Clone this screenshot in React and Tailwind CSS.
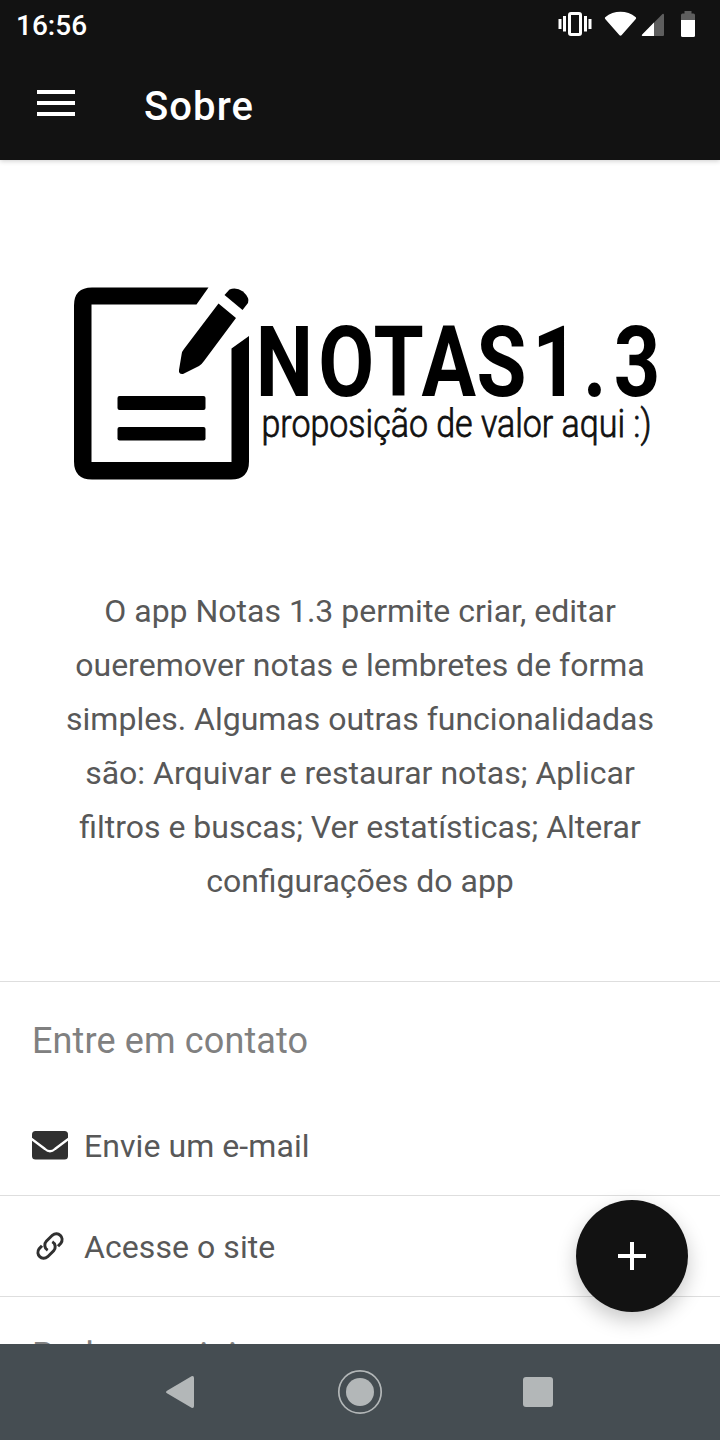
function StatusBar() {
  return (
    <div className="flex h-[50px] items-center justify-between pl-4 pr-6">
      <span className="pt-[2px] text-[28px] font-medium leading-[50px]">16:56</span>
      <svg className="h-[50px] w-[140px]" viewBox="556 0 140 50" fill="#fff">
        <rect x="569.5" y="13.5" width="11" height="21" rx="1.5" fill="none" stroke="#fff" strokeWidth="3" />
        <path d="M558.5 19h3v10h-3zM563 16h3v15.500h-3zM584 16h3v15.500h-3zM588.500 19h3v10h-3z" />
        <path d="M605.200 17.300C614 10 627 10 635.800 17.300q.8.800 0 1.700L621.500 35.200q-1 .9-2 0L605.200 19q-.8-.9 0-1.700z" />
        <path d="M664 14.500v20.500q0 1-1 1h-20.500q-1.200-.4-.5-1.200L662.500 14q1.200-.7 1.500.5z" fill="#5e5e5e" />
        <path d="M654 22.500V36h-11.500q-1.200-.4-.5-1.200z" />
        <path d="M681 20v-5q0-1.500 1.500-1.500h2V11h7v2.500h2q1.500 0 1.500 1.500v5z" fill="#5e5e5e" />
        <path d="M681 20h14v15.500q0 1.500-1.500 1.500h-11q-1.500 0-1.500-1.500z" />
      </svg>
    </div>
  );
}

function Header() {
  return (
    <header className="relative z-10 h-40 shrink-0 bg-[#121212] text-white shadow-[0_1px_5px_rgba(0,0,0,0.2)]">
      <StatusBar />
      <div className="flex h-[110px] items-center pl-[37px]">
        <svg className="mb-1 h-[26px] w-[38px]" viewBox="0 0 38 26" fill="#fff">
          <path d="M0 0h38v4H0zM0 11h38v4H0zM0 22h38v4H0z" />
        </svg>
        <h1 className="ml-[69px] pt-1 text-[40px] font-medium leading-[50px] tracking-[1.1px]">Sobre</h1>
      </div>
    </header>
  );
}

function Logo() {
  return (
    <svg className="h-[200px] w-[600px]" viewBox="60 284 600 200">
      <path d="M208.500 287.500H92Q74 287.500 74 305.500V461.500Q74 479.500 92 479.500H231Q249 479.500 249 461.500V336L231.500 348.500V462H91.500V304.500H196.500z" />
      <path d="M218.500 303.500L236 318L204 361Q202 364 199 366L183 374Q178.500 374.500 179 370L181.500 355Q182 351 184 349z" />
      <path d="M224.500 295L229.500 289.500Q236 286.500 243 291.500Q250 298 248 303L242.500 310z" />
      <rect x="117.500" y="396" width="88" height="14" rx="2" />
      <rect x="117.500" y="427" width="88" height="13.500" rx="2" />
      <text
        transform="scale(.82 1)"
        x="312 388 455.500 514 581 649 711 748.500"
        y="396"
        fontSize="99"
        fontWeight="700"
      >
        NOTAS1.3
      </text>
      <text x="261.500" y="437" fontSize="39" fontWeight="300" fill="#111" stroke="#111" strokeWidth=".8" textLength="390" lengthAdjust="spacingAndGlyphs">
        proposição de valor aqui :)
      </text>
    </svg>
  );
}

function EnvelopeIcon() {
  return (
    <svg className="h-[29px] w-9" viewBox="0 0 36 29" fill="#303030">
      <rect width="36" height="28.500" rx="3.500" />
      <path d="M-1 7.500L13 18Q18 22.500 23 18L37 7.500" fill="none" stroke="#fff" strokeWidth="2.300" />
    </svg>
  );
}

function LinkIcon() {
  return (
    <svg className="mx-1 size-7" viewBox="0 0 28 28" fill="none" stroke="#303030" strokeWidth="3">
      <path d="M11.700 18.300C8.200 16.300 8 11.700 10.300 9.300L16.300 3.300C22 -1.300 29 5.500 24.800 11.300L22 14.300" />
      <path d="M16.300 9.700C19.800 11.700 20 16.300 17.700 18.700L11.700 24.700C6 29.300 -1 22.500 3.200 16.700L6 13.700" />
    </svg>
  );
}

function NavBar() {
  return (
    <nav className="relative z-20 h-24 shrink-0 bg-[#454d52]">
      <svg className="h-24 w-[720px]" viewBox="0 0 720 96" fill="#b3b7b8">
        <path d="M167 46.700L191.500 32.300Q194 31.500 194 34V62Q194 64.500 191.500 63.800L167 49.300Q165 48 167 46.700z" />
        <circle cx="360" cy="48" r="14" />
        <circle cx="360" cy="48" r="21.200" fill="none" stroke="#b3b7b8" strokeWidth="1.700" />
        <rect x="523" y="33" width="30" height="30" rx="3" />
      </svg>
    </nav>
  );
}

export default function App() {
  return (
    <div className="flex h-[1440px] w-[720px] flex-col overflow-hidden bg-white font-['Roboto',sans-serif]">
      <Header />
      <main className="relative min-h-0 flex-1 overflow-hidden text-[#585858]">
        <section className="flex h-[822px] flex-col items-center border-b border-[#dedede] pt-[124px]">
          <Logo />
          <p className="mt-[100px] whitespace-nowrap text-center text-[32px] leading-[54px]">
            O app Notas 1.3 permite criar, editar
            <br />
            oueremover notas e lembretes de forma
            <br />
            simples. Algumas outras funcionalidadas
            <br />
            são: Arquivar e restaurar notas; Aplicar
            <br />
            filtros e buscas; Ver estatísticas; Alterar
            <br />
            configurações do app
          </p>
        </section>
        <h2 className="h-[113px] pl-8 pt-[34px] text-[36px] leading-[50px] tracking-[0.13px] text-[#808080]">Entre em contato</h2>
        <a className="flex h-[101px] items-center gap-4 border-b border-[#dedede] pl-8 text-[32px]">
          <EnvelopeIcon />
          <span className="pt-[2px] tracking-[0.07px]">Envie um e-mail</span>
        </a>
        <a className="flex h-[101px] items-center gap-4 border-b border-[#dedede] pl-8 text-[32px]">
          <LinkIcon />
          <span className="pt-[2px] tracking-[0.07px]">Acesse o site</span>
        </a>
        <h2 className="pl-8 pt-[34px] text-[36px] leading-[50px] tracking-[0.13px] text-[#808080]">Redes sociais</h2>
        <button className="absolute bottom-8 right-8 flex size-28 items-center justify-center rounded-full bg-[#121212] shadow-[0_8px_20px_rgba(0,0,0,0.22)]">
          <svg className="size-7" viewBox="0 0 28 28" fill="#fff">
            <path d="M12 0h4v12h12v4H16v12h-4V16H0v-4h12z" />
          </svg>
        </button>
      </main>
      <NavBar />
    </div>
  );
}
